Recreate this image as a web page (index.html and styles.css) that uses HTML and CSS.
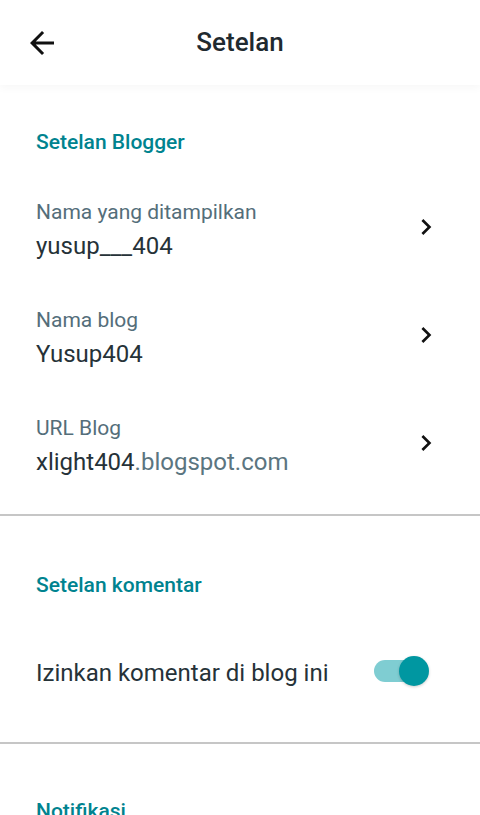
FILE: index.html
```html
<!DOCTYPE html>
<html lang="id">
<head>
  <meta charset="UTF-8">
  <meta name="viewport" content="width=device-width, initial-scale=1.0">
  <title>Setelan</title>
  <link rel="stylesheet" href="styles.css">
</head>
<body>
  <header class="topbar">
    <button class="back-btn" aria-label="Kembali">
      <svg viewBox="0 0 24 24" width="36" height="36"><path d="M20 11H7.83l5.59-5.59L12 4l-8 8 8 8 1.41-1.41L7.83 13H20v-2z"/></svg>
    </button>
    <h1>Setelan</h1>
  </header>

  <main>
    <section class="section first">
      <h2>Setelan Blogger</h2>
      <div class="item">
        <div class="item-text">
          <div class="label">Nama yang ditampilkan</div>
          <div class="value">yusup___404</div>
        </div>
        <svg class="chevron" viewBox="0 0 24 24" width="32" height="32"><path d="M10 6L8.59 7.41 13.17 12l-4.58 4.59L10 18l6-6z"/></svg>
      </div>
      <div class="item">
        <div class="item-text">
          <div class="label">Nama blog</div>
          <div class="value">Yusup404</div>
        </div>
        <svg class="chevron" viewBox="0 0 24 24" width="32" height="32"><path d="M10 6L8.59 7.41 13.17 12l-4.58 4.59L10 18l6-6z"/></svg>
      </div>
      <div class="item">
        <div class="item-text">
          <div class="label">URL Blog</div>
          <div class="value">xlight404<span class="muted">.blogspot.com</span></div>
        </div>
        <svg class="chevron" viewBox="0 0 24 24" width="32" height="32"><path d="M10 6L8.59 7.41 13.17 12l-4.58 4.59L10 18l6-6z"/></svg>
      </div>
    </section>

    <section class="section">
      <h2>Setelan komentar</h2>
      <div class="switch-row">
        <span class="value">Izinkan komentar di blog ini</span>
        <span class="switch on"><span class="thumb"></span></span>
      </div>
    </section>

    <section class="section last">
      <h2>Notifikasi</h2>
    </section>
  </main>
</body>
</html>
```

FILE: styles.css
```css
body {
  font-family: Roboto, "Noto Sans", sans-serif;
  background: #ffffff;
  color: #263238;
  margin: 0;
  padding: 0;
  overflow: hidden;
}
.topbar {
  height: 85px;
  display: flex;
  align-items: center;
  position: relative;
  background: #ffffff;
  box-shadow: 0 3px 8px rgba(0, 40, 40, 0.035);
}
.back-btn {
  background: none;
  border: none;
  padding: 0;
  margin-left: 24px;
  width: 36px;
  height: 36px;
  display: flex;
}
.back-btn svg {
  fill: #111111;
}
.topbar h1 {
  position: absolute;
  left: 0;
  right: 0;
  top: 26px;
  text-align: center;
  margin: 0;
  font-size: 26px;
  line-height: 32px;
  font-weight: 500;
  color: #1f2a30;
  pointer-events: none;
}
.section {
  padding: 0 36px;
  border-bottom: 2px solid #c6c6c6;
}
.section h2 {
  margin: 0;
  padding-top: 57px;
  font-size: 21px;
  line-height: 24px;
  font-weight: 500;
  color: #00838f;
}
.section.first {
  padding-bottom: 15px;
}
.section.first h2 {
  padding-top: 45px;
  margin-bottom: 21px;
}
.item {
  display: flex;
  align-items: center;
  justify-content: space-between;
  padding: 24px 0 22px;
}
.item-text {
  display: flex;
  flex-direction: column;
  gap: 6px;
}
.label {
  font-size: 21px;
  line-height: 26px;
  color: #546e7a;
}
.value {
  font-size: 24px;
  line-height: 30px;
  color: #263238;
}
.muted {
  color: #5b7580;
}
.chevron {
  fill: #111111;
  margin-right: 2px;
  margin-bottom: 6px;
}
.switch-row {
  display: flex;
  align-items: center;
  justify-content: space-between;
  margin-top: 61px;
  padding-bottom: 54px;
}
.switch {
  position: relative;
  width: 40px;
  height: 22px;
  border-radius: 11px;
  background: #7fcdd2;
  margin-right: 30px;
  margin-bottom: 4px;
}
.thumb {
  position: absolute;
  top: -4px;
  right: -15px;
  width: 30px;
  height: 30px;
  border-radius: 50%;
  background: #0097a1;
  box-shadow: 0 1px 3px rgba(0, 0, 0, 0.2);
}
.section.last {
  border-bottom: none;
}
.section.last h2 {
  padding-top: 55px;
}
```
